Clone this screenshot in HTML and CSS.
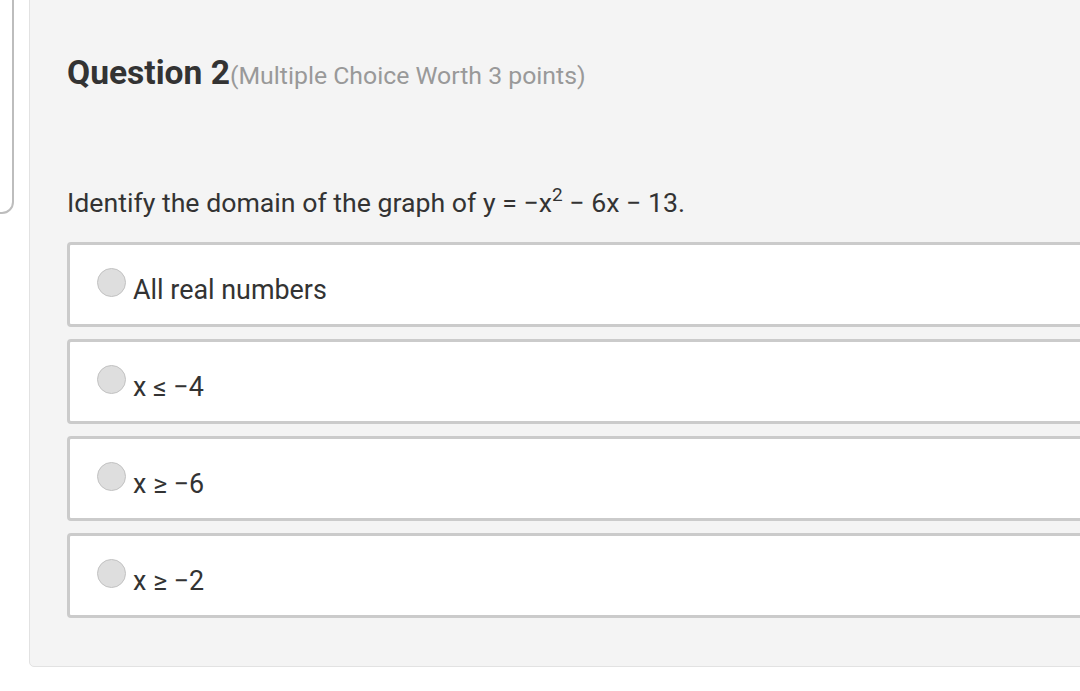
FILE: index.html
```html
<!DOCTYPE html>
<html>
<head>
<meta charset="utf-8">
<link rel="stylesheet" href="styles.css">
</head>
<body>
<div class="page">
  <div class="sidebar"></div>
  <div class="panel">
    <h2 class="title"><span class="qnum">Question 2</span><span class="qmeta">(Multiple Choice Worth 3 points)</span></h2>
    <p class="prompt">Identify the domain of the graph of y = −x<sup>2</sup> − 6x − 13.</p>
    <div class="options">
      <div class="option"><span class="radio"></span><span class="label">All real numbers</span></div>
      <div class="option"><span class="radio"></span><span class="label">x ≤ −4</span></div>
      <div class="option"><span class="radio"></span><span class="label">x ≥ −6</span></div>
      <div class="option"><span class="radio"></span><span class="label">x ≥ −2</span></div>
    </div>
  </div>
</div>
</body>
</html>
```

FILE: styles.css
```css
html, body {
  margin: 0;
  padding: 0;
  background: #ffffff;
  overflow: hidden;
  width: 1080px;
  height: 691px;
}
body {
  font-family: Roboto, "Liberation Sans", sans-serif;
  color: #333333;
}
.page {
  display: flex;
  align-items: flex-start;
  width: 1200px;
}
.sidebar {
  flex: none;
  width: 100px;
  height: 220px;
  margin-left: -90px;
  margin-top: -10px;
  border: 2px solid #bdbdbd;
  border-radius: 0 0 12px 0;
  background: #ffffff;
}
.panel {
  flex: none;
  width: 1150px;
  margin-left: 15px;
  margin-top: -10px;
  background: #f4f4f4;
  border: 1px solid #e2e2e2;
  border-radius: 5px;
  padding: 0 0 48px 37px;
  box-sizing: border-box;
}
.title {
  margin: 62px 0 0 0;
  font-weight: normal;
  line-height: 40px;
  white-space: nowrap;
}
.qnum {
  font-size: 33.6px;
  font-weight: bold;
  color: #333333;
}
.qmeta {
  font-size: 24.8px;
  color: #999999;
}
.prompt {
  margin: 92px 0 0 0;
  font-size: 26.7px;
  line-height: 30px;
  color: #333333;
  white-space: nowrap;
}
.prompt sup {
  font-size: 19px;
  line-height: 0;
  vertical-align: 11px;
}
.options {
  display: flex;
  flex-direction: column;
  gap: 12px;
  margin-top: 24px;
}
.option {
  display: flex;
  align-items: flex-start;
  height: 85px;
  box-sizing: border-box;
  background: #ffffff;
  border: 3px solid #cbcbcb;
  border-radius: 4px;
  padding-left: 27px;
}
.radio {
  flex: none;
  width: 27px;
  height: 27px;
  margin-top: 23px;
  border-radius: 50%;
  background: #dedede;
  border: 1px solid #c2c2c2;
}
.label {
  margin-top: 30px;
  margin-left: 7px;
  font-size: 26.9px;
  line-height: 30px;
  color: #333333;
}
```
